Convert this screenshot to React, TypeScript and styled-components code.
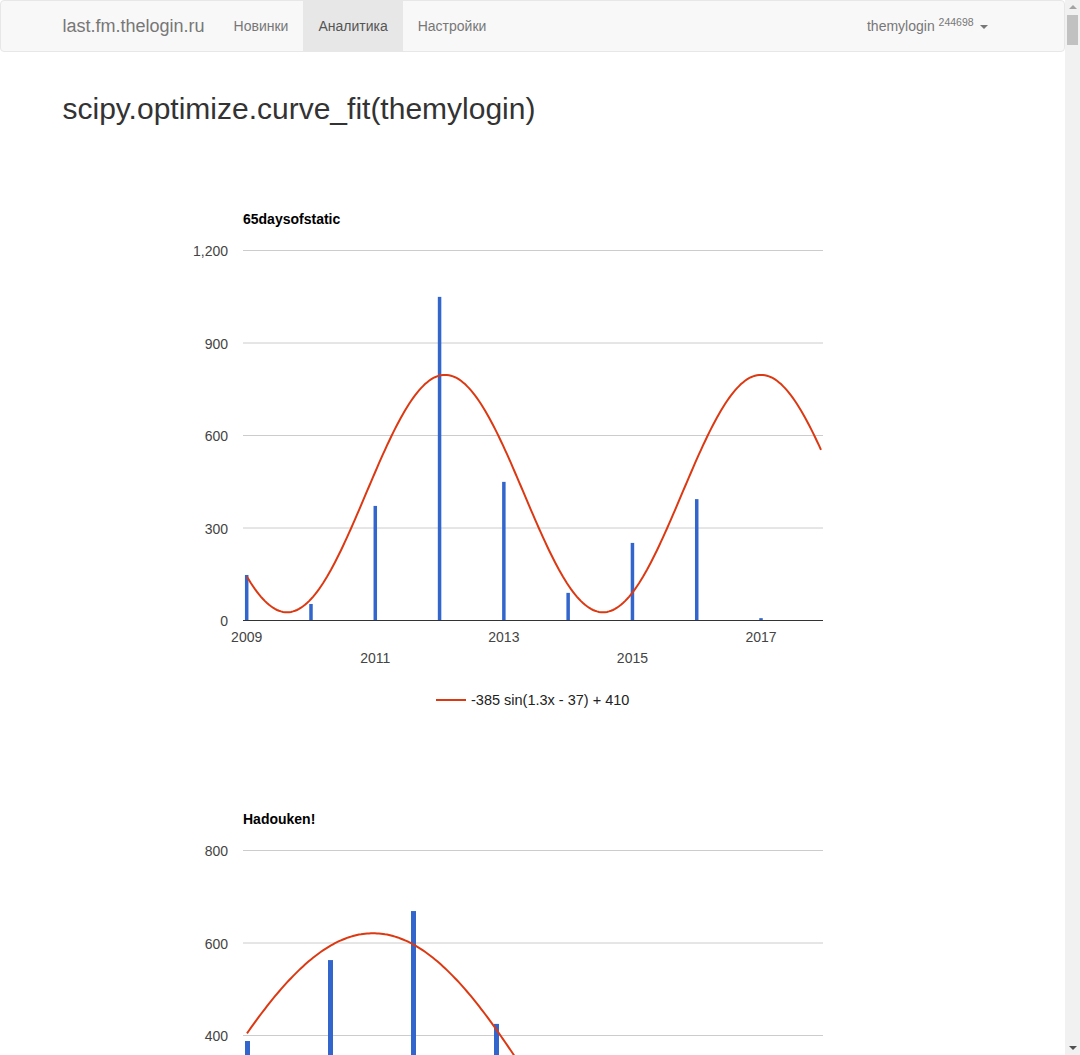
import React from "react";
import styled, { createGlobalStyle } from "styled-components";

const GlobalStyle = createGlobalStyle`
  * { box-sizing: border-box; }
  body {
    margin: 0 15px 0 0;
    font-family: "Liberation Sans", Arial, sans-serif;
    font-size: 14px;
    line-height: 1.42857;
    color: #333;
    background: #fff;
  }
`;

// window scrollbar as it shows in the screenshot (the headless page hides its own)
const ScrollTrack = styled.div`
  position: fixed;
  top: 0;
  right: 0;
  width: 15px;
  height: 100vh;
  background: #f1f1f1;
  display: flex;
  flex-direction: column;
  align-items: center;
`;

const ScrollArrow = styled.div<{ $down?: boolean; $color: string }>`
  width: 0;
  height: 0;
  margin: ${(p) => (p.$down ? "auto 0 5px" : "5px 0 0")};
  border-left: 4px solid transparent;
  border-right: 4px solid transparent;
  ${(p) =>
    p.$down
      ? `border-top: 4px solid ${p.$color};`
      : `border-bottom: 4px solid ${p.$color};`}
`;

const ScrollThumb = styled.div`
  width: 11px;
  height: 30px;
  margin-top: 6px;
  background: #c1c1c1;
`;

const Navbar = styled.nav`
  min-height: 50px;
  margin-bottom: 20px;
  background: #f8f8f8;
  border: 1px solid #e7e7e7;
  border-radius: 4px;
`;

const Container = styled.div`
  width: 970px;
  margin: 0 auto;
  padding: 0 15px;
  &::before { content: " "; display: table; }
`;

const NavInner = styled(Container)`
  display: flex;
  align-items: stretch;
  &::before { display: none; }
`;

const Brand = styled.a`
  height: 50px;
  padding: 15px 14px 15px 15px;
  margin-left: -15px;
  font-size: 18px;
  line-height: 20px;
  color: #777;
  text-decoration: none;
`;

const NavList = styled.ul`
  display: flex;
  margin: 0;
  padding: 0;
  list-style: none;
`;

const NavRight = styled(NavList)`
  margin-left: auto;
`;

const NavLink = styled.a<{ $active?: boolean }>`
  display: block;
  padding: 15px;
  line-height: 20px;
  color: ${(p) => (p.$active ? "#555" : "#777")};
  background: ${(p) => (p.$active ? "#e7e7e7" : "transparent")};
  text-decoration: none;
`;

const Sup = styled.sup`
  font-size: 75%;
  line-height: 0;
  position: relative;
  vertical-align: baseline;
  top: -0.5em;
`;

const Caret = styled.span`
  display: inline-block;
  width: 0;
  height: 0;
  margin-left: 2px;
  vertical-align: middle;
  border-top: 4px solid;
  border-right: 4px solid transparent;
  border-left: 4px solid transparent;
`;

const PageTitle = styled.h2`
  margin: 20px 0 10px;
  font-size: 30px;
  font-weight: 500;
  line-height: 1.1;
  color: #333;
`;

const ChartSvg = styled.svg`
  display: block;
  font-family: "Liberation Sans", Arial, sans-serif;
`;

const ChartTitle = styled.text`
  font-size: 14px;
  font-weight: 700;
  fill: #000;
`;

const AxisLabel = styled.text`
  font-size: 14px;
  fill: #444;
`;

const LegendText = styled.text`
  font-size: 14.5px;
  fill: #222;
`;

// chart area inside each svg (svg starts at page x=63)
const LEFT = 180;
const RIGHT = 760;
const TOP = 115;
const BOTTOM = 485;
const ORIGIN_X = 63;

type ChartData = {
  title: string;
  max: number;
  step: number;
  bars: number[];
  barStart: number;
  barStep: number;
  barWidth: number;
  xLabels?: { index: number; label: string; row: number }[];
  curve: (pageX: number) => number;
  curveFrom: number;
  curveTo: number;
  legend?: string;
};

const fmt = (n: number) => n.toLocaleString("en-US");

const ComboChart = ({ data }: { data: ChartData }) => {
  const scale = (v: number) => BOTTOM - (v / data.max) * (BOTTOM - TOP);
  const ticks: number[] = [];
  for (let v = 0; v <= data.max; v += data.step) ticks.push(v);

  let d = "";
  for (let x = data.curveFrom; x <= data.curveTo; x += 2) {
    const y = scale(data.curve(x));
    d += (d ? " L" : "M") + (x - ORIGIN_X).toFixed(1) + " " + y.toFixed(1);
  }

  return (
    <ChartSvg width={940} height={600} viewBox="0 0 940 600">
      <defs>
        <clipPath id={"clip-" + data.title}>
          <rect x={LEFT} y={TOP - 60} width={RIGHT - LEFT} height={BOTTOM - TOP + 60} />
        </clipPath>
      </defs>
      <ChartTitle x={LEFT} y={89}>{data.title}</ChartTitle>
      {ticks.map((v) => (
        <g key={v}>
          {v > 0 && (
            <line x1={LEFT} x2={RIGHT} y1={scale(v) + 0.5} y2={scale(v) + 0.5} stroke="#ccc" strokeWidth={1} />
          )}
          <AxisLabel x={165} y={scale(v) + 6} textAnchor="end">{fmt(v)}</AxisLabel>
        </g>
      ))}
      {data.bars.map((v, i) => {
        const cx = data.barStart + i * data.barStep;
        const top = scale(v);
        return (
          <rect key={i} x={cx - data.barWidth / 2} y={top} width={data.barWidth} height={BOTTOM - top} fill="#3366cc" />
        );
      })}
      <line x1={LEFT} x2={RIGHT} y1={BOTTOM + 0.5} y2={BOTTOM + 0.5} stroke="#333" strokeWidth={1} />
      <path d={d} fill="none" stroke="#dc3912" strokeWidth={2} clipPath={`url(#clip-${data.title})`} />
      {data.xLabels &&
        data.xLabels.map((l) => (
          <AxisLabel key={l.label} x={data.barStart + l.index * data.barStep} y={l.row ? 528 : 507} textAnchor="middle">
            {l.label}
          </AxisLabel>
        ))}
      {data.legend && (
        <g>
          <line x1={373} x2={403} y1={565} y2={565} stroke="#dc3912" strokeWidth={2} />
          <LegendText x={408} y={570}>{data.legend}</LegendText>
        </g>
      )}
    </ChartSvg>
  );
};

const charts: ChartData[] = [
  {
    title: "65daysofstatic",
    max: 1200,
    step: 300,
    bars: [146, 52, 370, 1048, 448, 88, 250, 392, 6],
    barStart: 183.7,
    barStep: 64.29,
    barWidth: 3.5,
    xLabels: [
      { index: 0, label: "2009", row: 0 },
      { index: 2, label: "2011", row: 1 },
      { index: 4, label: "2013", row: 0 },
      { index: 6, label: "2015", row: 1 },
      { index: 8, label: "2017", row: 0 },
    ],
    curve: (x) => 410 - 385 * Math.sin((2 * Math.PI * (x - 524)) / 316),
    curveFrom: 247,
    curveTo: 821,
    legend: "-385 sin(1.3x - 37) + 410",
  },
  {
    title: "Hadouken!",
    max: 800,
    step: 200,
    bars: [387, 562, 668, 424],
    barStart: 184.5,
    barStep: 83,
    barWidth: 5,
    curve: (x) => 220 + 400 * Math.cos(0.00868 * (x - 373)),
    curveFrom: 247,
    curveTo: 821,
  },
];

const App = () => {
  return (
    <>
      <GlobalStyle />
      <Navbar>
        <NavInner>
          <Brand href="#">last.fm.thelogin.ru</Brand>
          <NavList>
            <li><NavLink href="#">Новинки</NavLink></li>
            <li><NavLink href="#" $active>Аналитика</NavLink></li>
            <li><NavLink href="#">Настройки</NavLink></li>
          </NavList>
          <NavRight>
            <li>
              <NavLink href="#">
                themylogin <Sup>244698</Sup> <Caret />
              </NavLink>
            </li>
          </NavRight>
        </NavInner>
      </Navbar>
      <Container>
        <PageTitle>scipy.optimize.curve_fit(themylogin)</PageTitle>
        {charts.map((c) => (
          <ComboChart key={c.title} data={c} />
        ))}
      </Container>
      <ScrollTrack>
        <ScrollArrow $color="#a3a3a3" />
        <ScrollThumb />
        <ScrollArrow $down $color="#505050" />
      </ScrollTrack>
    </>
  );
};

export default App;
